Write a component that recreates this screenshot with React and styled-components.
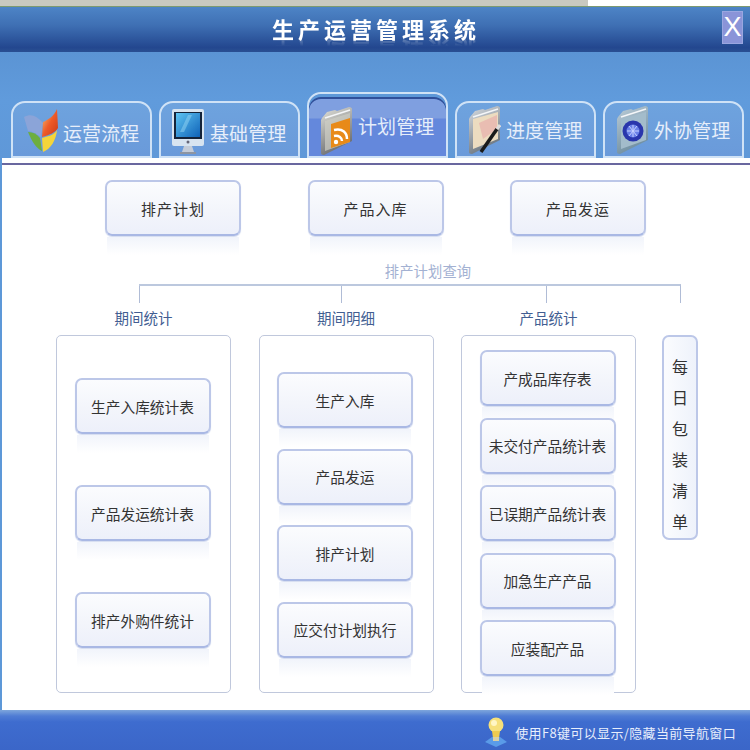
import React from "react";
import styled, { createGlobalStyle } from "styled-components";

const GlobalStyle = createGlobalStyle`
  html, body { margin: 0; padding: 0; background: #fff; }
  * { box-sizing: border-box; }
`;

const cjk = `"Noto Sans CJK SC", "Liberation Sans", sans-serif`;

const Window = styled.div`
  width: 750px;
  height: 750px;
  display: flex;
  flex-direction: column;
  overflow: hidden;
  font-family: ${cjk};
  background: #5d98d8;
`;

const TopStrip = styled.div`
  height: 7px;
  background: linear-gradient(to right, #c9c9c0 0, #c9c9c0 588px, #fff 588px);
  border-bottom: 1px solid #7d9a70;
`;

const Header = styled.div`
  height: 45px;
  flex: none;
  display: flex;
  align-items: center;
  justify-content: center;
  position: relative;
  background: linear-gradient(to bottom, #4d84c6 0%, #3f70b4 40%, #23478f 90%, #2a4f92 100%);
`;

const Title = styled.div`
  color: #fff;
  font-size: 22px;
  font-weight: 700;
  letter-spacing: 4px;
  margin: -3px 0 0 2px;
  line-height: 30px;
  -webkit-box-reflect: below -8px linear-gradient(transparent 62%, rgba(255, 255, 255, 0.42));
`;

const CloseButton = styled.button`
  position: absolute;
  right: 7px;
  top: 4px;
  width: 21px;
  height: 33px;
  padding: 0;
  border: none;
  background: #8a94d8;
  box-shadow: inset 0 0 0 1px #9aa6e0;
  color: #fff;
  font-family: "Liberation Sans", sans-serif;
  font-size: 27px;
  line-height: 33px;
`;

const TabBand = styled.div`
  height: 106px;
  flex: none;
  display: flex;
  align-items: flex-end;
  gap: 7px;
  padding-left: 11px;
  background: linear-gradient(to bottom, #5b94d4 0%, #609bdc 45%, #5f98d8 100%);
`;

const Tab = styled.div`
  width: 141px;
  height: ${(p) => (p.$active ? 66 : 57)}px;
  display: flex;
  align-items: flex-start;
  gap: ${(p) => p.$gap}px;
  padding: ${(p) => (p.$active ? 12 : p.$low ? 5 : 2)}px 0 0 ${(p) => p.$pad}px;
  border: 2px solid #cfe2f6;
  border-radius: 14px 14px 0 0;
  background: ${(p) =>
    p.$active
      ? "linear-gradient(to bottom, #7f9fe0 0, #7f9fe0 24px, #6488dc 25px, #6488dc 100%)"
      : "linear-gradient(to bottom, #6ea3de, #6a9ada)"};
  box-shadow: ${(p) => (p.$active ? "inset 0 3px 0 #5d98d8, inset 0 5px 0 #2f4f9a" : "none")};
`;

const TabIcon = styled.span`
  display: block;
  flex: none;
  height: 50px;
  filter: blur(0.5px);
`;

const TabLabel = styled.span`
  color: #e6eefa;
  font-size: 19px;
  letter-spacing: 0.1px;
  line-height: ${(p) => (p.$active ? 40 : 50)}px;
  white-space: nowrap;
`;

const Content = styled.div`
  flex: 1;
  margin-left: 2px;
  background: #fff;
  padding-top: 5px;
  display: flex;
  flex-direction: column;
`;

const Rule = styled.div`
  height: 2px;
  background: #69679f;
`;

const TopRow = styled.div`
  display: flex;
  gap: 66.5px;
  padding: 15px 0 0 103px;
`;

const ActionButton = styled.button`
  position: relative;
  display: block;
  width: 136px;
  height: 56px;
  padding: 0;
  border: 2px solid #bcc7e8;
  border-bottom-color: #a9b8e4;
  border-radius: 7px;
  background: linear-gradient(to bottom, #fbfcfe 0%, #f3f5fb 55%, #edf0fa 100%);
  box-shadow: 0 1px 1px #d4dcf0;
  color: #333;
  font-family: ${cjk};
  font-size: ${(p) => (p.$wide ? 15 : 14.7)}px;
  letter-spacing: ${(p) => (p.$wide ? 1 : 0)}px;
  &::after {
    content: "";
    position: absolute;
    left: 0;
    right: 0;
    top: 100%;
    height: 18px;
    margin-top: 3px;
    background: linear-gradient(to bottom, #f1f4fb, #ffffff);
  }
`;

const QueryLabel = styled.div`
  margin: 25px 0 0 0;
  width: 852px;
  text-align: center;
  height: 20px;
  line-height: 20px;
  color: #a3b1d2;
  font-size: 14.3px;
  letter-spacing: 0.1px;
`;

const Tree = styled.div`
  margin: 3px 0 0 137px;
  width: 542px;
  height: 19px;
  display: grid;
  grid-template-columns: 202px 205px 134px;
  border-top: 2px solid #bcc8de;
  border-right: 1px solid #b0bcd6;
`;

const Stem = styled.div`
  border-left: 1px solid #b0bcd6;
`;

const Columns = styled.div`
  display: flex;
  gap: 27.5px;
  padding-left: 54px;
  align-items: flex-start;
`;

const Column = styled.div`
  display: flex;
  flex-direction: column;
  width: 175px;
`;

const ColumnTitle = styled.div`
  height: 32px;
  line-height: 30px;
  text-align: center;
  color: #425e92;
  font-size: 14.5px;
`;

const Panel = styled.div`
  height: 358px;
  display: flex;
  flex-direction: column;
  align-items: center;
  gap: ${(p) => p.$gap}px;
  padding-top: ${(p) => p.$top}px;
  padding-right: 2px;
  border: 1px solid #c0c8dc;
  border-radius: 5px;
  background: #fff;
`;

const VerticalButton = styled.button`
  position: relative;
  width: 36px;
  height: 205px;
  margin: 32px 0 0 -1.5px;
  padding: 0;
  border: 2px solid #bcc7e8;
  border-radius: 7px;
  background: linear-gradient(to right, #fbfcfe, #eef2fb);
  color: #333;
  font-family: ${cjk};
  font-size: 16px;
  display: flex;
  align-items: flex-start;
  justify-content: center;
`;

const VerticalText = styled.span`
  margin-top: 22px;
  writing-mode: vertical-rl;
  white-space: nowrap;
  letter-spacing: 15px;
  line-height: 32px;
`;

const Footer = styled.div`
  height: 40px;
  flex: none;
  display: flex;
  align-items: center;
  justify-content: flex-end;
  gap: 7px;
  padding: 4px 14px 0 0;
  color: #e8eefc;
  font-size: 13px;
  letter-spacing: 0.35px;
  background: linear-gradient(to bottom, #7ea6dc 0, #4f7cd4 6px, #3e6ccf 12px, #3b66c8 100%);
`;

const WinIcon = () => (
  <svg width="38" height="46" viewBox="0 0 38 46">
    <defs>
      <linearGradient id="flagR" x1="0" y1="0" x2="1" y2="1">
        <stop offset="0" stopColor="#f0d080" />
        <stop offset="0.5" stopColor="#ee5a28" />
        <stop offset="1" stopColor="#c83a18" />
      </linearGradient>
    </defs>
    <path d="M1 9C8 5 14 8 20 15L18 29C12 25 8 23 5 23Z" fill="#8ba4d8" />
    <path d="M20 14C25 12 31 8 34 1L35 20C32 25 26 27 19 29Z" fill="url(#flagR)" />
    <path d="M5 24C10 24 14 26 17 30L19 43C14 41 9 34 5 24Z" fill="#6dae3e" />
    <path d="M19 30C26 28 31 27 34 22C33 32 28 41 20 44Z" fill="#f4d53a" />
  </svg>
);

const MacIcon = () => (
  <svg width="36" height="48" viewBox="0 0 36 48">
    <defs>
      <linearGradient id="macScreen" x1="0" y1="0" x2="1" y2="1">
        <stop offset="0" stopColor="#5ec4f2" />
        <stop offset="1" stopColor="#0f62b8" />
      </linearGradient>
    </defs>
    <rect x="1" y="1" width="32" height="37" rx="2" fill="#d8e4f0" />
    <rect x="3" y="4" width="28" height="27" fill="#14233a" />
    <rect x="5" y="5" width="24" height="24" fill="url(#macScreen)" />
    <path d="M9 24L17 7h4L13 24Z" fill="#9edcf6" opacity="0.45" />
    <circle cx="17" cy="34" r="1.5" fill="#667" />
    <path d="M13 38h8l2 6H11Z" fill="#c4ccd8" />
    <rect x="9" y="44" width="16" height="2" fill="#8d95a2" />
  </svg>
);

const Folder = ({ id, light, dark, children }) => (
  <svg width="33" height="50" viewBox="0 0 33 50">
    <defs>
      <linearGradient id={id} x1="0" y1="0" x2="0.4" y2="1">
        <stop offset="0" stopColor={light} />
        <stop offset="1" stopColor={dark} />
      </linearGradient>
    </defs>
    <path d="M2 12L7 6 15 4 17 5 29 1c2 0 3 1 3 2V35L4 49c-2 0-3-1-3-2V14Z" fill={`url(#${id})`} />
    <path d="M5 12L30 4" stroke="#f4f6f8" strokeWidth="1.5" fill="none" />
    {children}
  </svg>
);

const RssFolder = () => (
  <Folder id="rssBack" light="#e4e4dc" dark="#6a6c70">
    <path d="M5 15L30 7V36L5 45Z" fill="#cfcfc4" opacity="0.7" />
    <path d="M11 18L30 12V36L11 42Z" fill="#e88a18" />
    <circle cx="16" cy="36" r="2.2" fill="#fff" />
    <path d="M14 30c5-1 8 2 8 5M14 24c9-2 13 3 13 9" fill="none" stroke="#fff" strokeWidth="2.5" />
  </Folder>
);

const PenFolder = () => (
  <Folder id="penBack" light="#d8dde2" dark="#6c7680">
    <path d="M5 14L30 7V34L5 44Z" fill="#ecdcc0" />
    <path d="M11 18L29 10V24L15 34Z" fill="#e8a8a8" opacity="0.6" />
    <path d="M13 47L29 24" stroke="#1a1a1a" strokeWidth="3.5" />
    <path d="M29 24L32 20" stroke="#ddd" strokeWidth="3" />
  </Folder>
);

const GlobeFolder = () => (
  <Folder id="globeBack" light="#bccdd8" dark="#6f8ea0">
    <path d="M5 14L30 7V35L5 44Z" fill="#a3bccb" />
    <circle cx="17" cy="26" r="10.5" fill="#2a36ac" />
    <circle cx="17" cy="26" r="6.5" fill="#6a80e8" />
    <path d="M17 20v12M11 26h12M13 21l8 10M21 21l-8 10" stroke="#c8d2ff" strokeWidth="1" />
  </Folder>
);

const BulbIcon = () => (
  <svg width="24" height="32" viewBox="0 0 24 32">
    <path d="M1 26L8 21h8l7 5-11 5Z" fill="#5a9be8" />
    <circle cx="12" cy="9" r="7.5" fill="#f6e07a" />
    <circle cx="10" cy="7" r="3" fill="#fff6c4" />
    <path d="M8 15h8l-1 7H9Z" fill="#eecb50" />
    <rect x="9" y="21" width="6" height="4" fill="#d8d0a8" />
  </svg>
);

const tabs = [
  { label: "运营流程", icon: <WinIcon />, pad: 10, gap: 2, low: true },
  { label: "基础管理", icon: <MacIcon />, pad: 10, gap: 3, low: true },
  { label: "计划管理", icon: <RssFolder />, pad: 11, gap: 5, active: true },
  { label: "进度管理", icon: <PenFolder />, pad: 11, gap: 5 },
  { label: "外协管理", icon: <GlobeFolder />, pad: 11, gap: 5 },
];

const panels = [
  { title: "期间统计", top: 42, gap: 51, items: ["生产入库统计表", "产品发运统计表", "排产外购件统计"] },
  { title: "期间明细", top: 36, gap: 20.5, items: ["生产入库", "产品发运", "排产计划", "应交付计划执行"] },
  { title: "产品统计", top: 14, gap: 11.5, items: ["产成品库存表", "未交付产品统计表", "已误期产品统计表", "加急生产产品", "应装配产品"] },
];

export default function App() {
  return (
    <Window>
      <GlobalStyle />
      <TopStrip />
      <Header>
        <Title>生产运营管理系统</Title>
        <CloseButton>X</CloseButton>
      </Header>
      <TabBand>
        {tabs.map((t) => (
          <Tab key={t.label} $active={t.active} $low={t.low} $pad={t.pad} $gap={t.gap}>
            <TabIcon>{t.icon}</TabIcon>
            <TabLabel $active={t.active}>{t.label}</TabLabel>
          </Tab>
        ))}
      </TabBand>
      <Content>
        <Rule />
        <TopRow>
          <ActionButton $wide>排产计划</ActionButton>
          <ActionButton $wide>产品入库</ActionButton>
          <ActionButton $wide>产品发运</ActionButton>
        </TopRow>
        <QueryLabel>排产计划查询</QueryLabel>
        <Tree>
          <Stem />
          <Stem />
          <Stem />
        </Tree>
        <Columns>
          {panels.map((p) => (
            <Column key={p.title}>
              <ColumnTitle>{p.title}</ColumnTitle>
              <Panel $top={p.top} $gap={p.gap}>
                {p.items.map((item) => (
                  <ActionButton key={item}>{item}</ActionButton>
                ))}
              </Panel>
            </Column>
          ))}
          <VerticalButton>
            <VerticalText>每日包装清单</VerticalText>
          </VerticalButton>
        </Columns>
      </Content>
      <Footer>
        <BulbIcon />
        <span>使用F8键可以显示/隐藏当前导航窗口</span>
      </Footer>
    </Window>
  );
}
